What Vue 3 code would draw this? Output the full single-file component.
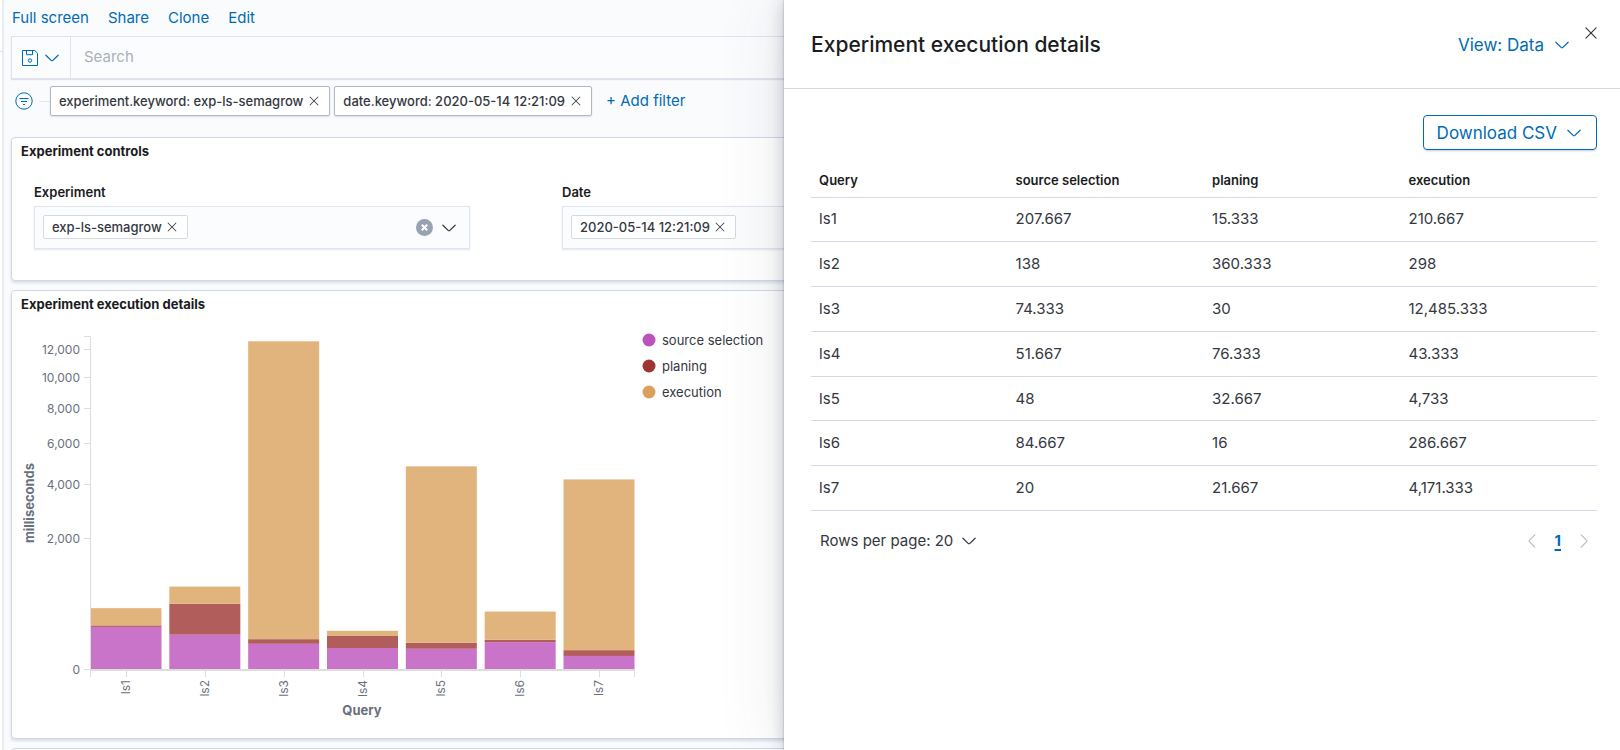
<script setup>
import { computed, ref } from 'vue'

const search = ref('')
const menu = ['Full screen', 'Share', 'Clone', 'Edit']
const filters = ['experiment.keyword: exp-ls-semagrow', 'date.keyword: 2020-05-14 12:21:09']
const controls = [
  { id: 'experiment', label: 'Experiment', value: 'exp-ls-semagrow' },
  { id: 'date', label: 'Date', value: '2020-05-14 12:21:09' }
]
const columns = ['Query', 'source selection', 'planing', 'execution']
const series = [
  { name: 'source selection', dot: '#bc52bc', fill: '#c973c9' },
  { name: 'planing', dot: '#9e3533', fill: '#b15d5b' },
  { name: 'execution', dot: '#daa05d', fill: '#e1b37d' }
]
const rows = [
  ['ls1', 207.667, 15.333, 210.667],
  ['ls2', 138, 360.333, 298],
  ['ls3', 74.333, 30, 12485.333],
  ['ls4', 51.667, 76.333, 43.333],
  ['ls5', 48, 32.667, 4733],
  ['ls6', 84.667, 16, 286.667],
  ['ls7', 20, 21.667, 4171.333]
]
const format = (v) => (typeof v === 'number' ? v.toLocaleString('en-US') : v)

// Square-root value scale over a band scale
const plotHeight = 333
const plotWidth = 544
const domainMax = 13000
const barWidth = 71
const step = (plotWidth - barWidth) / (rows.length - 1)
const y = (v) => plotHeight - plotHeight * Math.sqrt(v / domainMax)
const yTicks = [0, 2000, 4000, 6000, 8000, 10000, 12000].map((v) => ({ v, pos: Math.round(y(v)) + 0.5 }))

const bars = computed(() =>
  rows.map(([name, ...values], i) => {
    let sum = 0
    const parts = values.map((v, s) => {
      const bottom = y(sum)
      sum += v
      return { top: y(sum), height: bottom - y(sum), fill: series[s].fill }
    })
    const x = 0.5 + i * step
    return { name, x, mid: Math.round(x + barWidth / 2), parts }
  })
)

const chevron =
  'M13.069 5.157L8.384 9.768a.546.546 0 01-.768 0L2.93 5.158a.552.552 0 00-.771 0 .53.53 0 000 .759l4.684 4.61c.641.631 1.672.63 2.312 0l4.684-4.61a.53.53 0 000-.76.552.552 0 00-.771 0z'
const cross =
  'M7.293 8L3.146 3.854a.5.5 0 11.708-.708L8 7.293l4.146-4.147a.5.5 0 01.708.708L8.707 8l4.147 4.146a.5.5 0 01-.708.708L8 8.707l-4.146 4.147a.5.5 0 01-.708-.708L7.293 8z'
</script>

<template>
  <div class="app">
    <div class="nav-edge"></div>
    <main class="dashboard">
      <nav class="menu">
        <a v-for="item in menu" :key="item" href="#">{{ item }}</a>
      </nav>

      <div class="search">
        <button class="saved" aria-label="Saved queries">
          <svg width="18" height="18" viewBox="0 0 18 18" fill="none" stroke="currentColor">
            <path d="M1.5 1.5h12.3l2.7 2.7v12.3h-15z" />
            <path d="M5.5 1.5v4.2h6V1.5" />
            <circle cx="9" cy="11.5" r="1.7" />
          </svg>
          <svg class="icon" viewBox="0 0 16 16"><path :d="chevron" /></svg>
        </button>
        <input v-model="search" type="text" placeholder="Search" aria-label="Search" />
      </div>

      <div class="filters">
        <button class="filter-menu" aria-label="Filter options">
          <svg width="18" height="18" viewBox="0 0 18 18" fill="none" stroke="currentColor">
            <circle cx="9" cy="9" r="8.2" />
            <path d="M4.5 6.5h9M6 9.5h6M8 12.5h2" />
          </svg>
        </button>
        <span class="branch"></span>
        <span v-for="f in filters" :key="f" class="filter">
          {{ f }}
          <button :aria-label="'Remove ' + f"><svg class="small" viewBox="0 0 16 16"><path :d="cross" /></svg></button>
        </span>
        <button class="add">+ Add filter</button>
      </div>

      <section class="panel">
        <h2>Experiment controls</h2>
        <div class="controls">
          <div v-for="c in controls" :key="c.id" class="control">
            <label :for="c.id">{{ c.label }}</label>
            <div class="combo">
              <span class="pill">
                {{ c.value }}
                <button :aria-label="'Remove ' + c.value"><svg class="small" viewBox="0 0 16 16"><path :d="cross" /></svg></button>
              </span>
              <input :id="c.id" type="text" />
              <button class="clear" :aria-label="'Clear ' + c.label">
                <svg width="17" height="17" viewBox="0 0 17 17">
                  <circle cx="8.5" cy="8.5" r="8.5" fill="#98a2b3" />
                  <path d="M5.8 5.8l5.4 5.4M11.2 5.8l-5.4 5.4" stroke="#fff" stroke-width="2" />
                </svg>
              </button>
              <button :aria-label="'Open ' + c.label"><svg class="icon" viewBox="0 0 16 16"><path :d="chevron" /></svg></button>
            </div>
          </div>
        </div>
      </section>

      <section class="panel">
        <h2>Experiment execution details</h2>
        <div class="chart">
          <svg width="624" height="419" viewBox="0 0 624 419" role="img" aria-label="Milliseconds per query">
            <g transform="translate(78 17)">
              <g v-for="b in bars" :key="b.name">
                <rect
                  v-for="(p, i) in b.parts" :key="i"
                  :x="b.x" :y="p.top" :width="barWidth" :height="p.height" :fill="p.fill"
                />
              </g>
              <g class="axis">
                <path d="M-6 .5H.5V333" />
                <path v-for="t in yTicks" :key="t.v" :d="`M-6 ${t.pos}H0`" />
                <path class="base" :d="`M0 ${plotHeight + 1}H${plotWidth}`" />
                <path :d="`M.5 ${plotHeight}v8M${plotWidth + .5} ${plotHeight}v8`" />
                <path v-for="b in bars" :key="b.name" :d="`M${b.mid + .5} ${plotHeight + 1}v7`" />
              </g>
              <text v-for="t in yTicks" :key="t.v" class="tick" x="-10" :y="t.pos + 4" text-anchor="end">{{ format(t.v) }}</text>
              <text
                v-for="b in bars" :key="b.name" class="tick" text-anchor="end"
                :transform="`translate(${b.mid + 4} 344) rotate(-90)`"
              >{{ b.name }}</text>
              <text class="title" :x="plotWidth / 2" y="379" text-anchor="middle">Query</text>
              <text class="title" text-anchor="middle" transform="translate(-56 167) rotate(-90)">milliseconds</text>
            </g>
          </svg>
          <ul class="legend">
            <li v-for="s in series" :key="s.name">
              <svg width="14" height="14" viewBox="0 0 14 14"><circle cx="7" cy="7" r="6.5" :fill="s.dot" /></svg>
              {{ s.name }}
            </li>
          </ul>
        </div>
      </section>
      <section class="panel next"></section>
    </main>

    <aside class="flyout">
      <button class="close" aria-label="Close"><svg class="icon" viewBox="0 0 16 16"><path :d="cross" /></svg></button>
      <header>
        <h1>Experiment execution details</h1>
        <button class="view">View: Data <svg class="icon" viewBox="0 0 16 16"><path :d="chevron" /></svg></button>
      </header>
      <div class="body">
        <button class="download">Download CSV <svg class="icon" viewBox="0 0 16 16"><path :d="chevron" /></svg></button>
        <table>
          <thead>
            <tr><th v-for="c in columns" :key="c" scope="col">{{ c }}</th></tr>
          </thead>
          <tbody>
            <tr v-for="r in rows" :key="r[0]"><td v-for="(v, i) in r" :key="i">{{ format(v) }}</td></tr>
          </tbody>
        </table>
        <footer>
          <button class="per-page">Rows per page: 20 <svg class="icon" viewBox="0 0 16 16"><path :d="chevron" /></svg></button>
          <nav class="pages" aria-label="Pagination">
            <button disabled aria-label="Previous page"><svg class="icon left" viewBox="0 0 16 16"><path :d="chevron" /></svg></button>
            <a href="#" aria-current="page">1</a>
            <button disabled aria-label="Next page"><svg class="icon right" viewBox="0 0 16 16"><path :d="chevron" /></svg></button>
          </nav>
        </footer>
      </div>
    </aside>
  </div>
</template>

<style>
body { overflow: hidden; }
</style>

<style scoped>
* { box-sizing: border-box; }
.app {
  position: relative;
  display: flex;
  height: 100vh;
  overflow: hidden;
  background: #fafbfd;
  color: #343741;
  font: 400 15px/24px Inter, "Liberation Sans", sans-serif;
}
button {
  display: inline-flex;
  align-items: center;
  padding: 0;
  border: 0;
  background: none;
  color: inherit;
  font: inherit;
  cursor: pointer;
}
input {
  min-width: 0;
  flex: 1;
  border: 0;
  outline: 0;
  background: none;
  color: inherit;
  font: inherit;
}
h1, h2, ul { margin: 0; padding: 0; }
a { color: #006bb4; text-decoration: none; }
svg { display: block; flex: none; }
.icon { width: 18px; height: 18px; fill: currentColor; }
.small { width: 14px; height: 14px; fill: currentColor; }

.nav-edge {
  width: 4px;
  flex: none;
  border-right: 2px solid #e9ebf3;
  background: linear-gradient(#d9dde9, #d9dde9) 0 51px / 2px 1px no-repeat, #fff;
}
.dashboard { flex: 1; min-width: 0; padding: 0 11px 0 7px; }
.menu { display: flex; gap: 19px; height: 36px; padding: 6px 1px; }

.search {
  display: flex;
  height: 43px;
  border: 1px solid #dfe3ee;
  background: #fbfcfd;
  box-shadow: 0 1px 1px #dfe2ea;
}
.saved {
  gap: 4px;
  padding: 0 9px;
  border-right: 1px solid #dfe3ee;
  color: #006bb4;
}
.search input { padding: 0 13px 2px; }
.search input::placeholder { color: #abb0ba; opacity: 1; }

.filters { display: flex; align-items: center; height: 58px; padding: 0 0 14px 4px; }
.filter-menu { color: #006bb4; }
.branch { width: 11px; height: 1px; margin-left: 6px; background: #e2e6ef; }
.filter {
  display: flex;
  align-items: center;
  gap: 4px;
  height: 30px;
  margin-right: 4px;
  padding: 0 8px;
  border: 1px solid #b0b8c8;
  border-radius: 2px;
  background: #fff;
  box-shadow: 0 1px 2px #d9dde6;
  font-size: 13px;
  font-weight: 500;
}
.add { margin-left: 10px; color: #006bb4; }

.panel {
  margin-bottom: 9px;
  border: 1px solid #d0d7e6;
  border-radius: 4px;
  background: #fff;
  box-shadow: 0 2px 3px #d8dde8;
}
.panel h2 {
  padding: 3px 9px 5px;
  color: #1a1c21;
  font-size: 13px;
  line-height: 20px;
  font-weight: 700;
}
.next { height: 200px; }
.controls {
  display: grid;
  grid-template-columns: repeat(3, 1fr);
  gap: 92px;
  padding: 15px 82px 31px 22px;
}
.control label {
  display: block;
  margin-bottom: 3px;
  color: #1a1c21;
  font-size: 13px;
  line-height: 22px;
  font-weight: 600;
}
.combo {
  display: flex;
  align-items: center;
  height: 43px;
  padding: 0 11px 0 8px;
  border: 1px solid #dfe4ee;
  background: #fbfcfd;
  box-shadow: 0 1px 2px #e3e6ed;
}
.pill {
  display: flex;
  align-items: center;
  gap: 3px;
  height: 24px;
  margin-bottom: 2px;
  padding: 1px 8px 0;
  border: 1px solid #d3dae6;
  border-radius: 2px;
  background: #fff;
  font-size: 13px;
  font-weight: 500;
}
.clear { margin-right: 7px; }

.chart { display: flex; }
.legend { margin: 8px 0 0 6px; list-style: none; font-size: 13px; }
.legend li { display: flex; align-items: center; gap: 6px; height: 26px; }
.axis { fill: none; stroke: #ddd; }
.base { stroke-width: 2; }
.tick { fill: #69707d; font-size: 12px; }
.title { fill: #69707d; font-size: 13px; font-weight: 700; }

.flyout {
  position: absolute;
  top: 0;
  right: 0;
  bottom: 0;
  width: 51.6%;
  background: #fff;
  box-shadow: 0 0 2px rgba(65, 70, 90, .4), 0 0 16px rgba(65, 70, 90, .28), 0 0 64px rgba(65, 70, 90, .12);
}
.close { position: absolute; top: 24px; right: 20px; }
header {
  display: flex;
  align-items: center;
  justify-content: space-between;
  height: 89px;
  padding: 2px 49px 0 27px;
  border-bottom: 1px solid #d3dae6;
}
h1 { color: #1a1c21; font-size: 21px; line-height: 32px; font-weight: 500; }
.view { gap: 9px; color: #006bb4; font-size: 17px; }
.body { display: flex; flex-direction: column; padding: 26px 23px 0 27px; }
.download {
  align-self: flex-end;
  gap: 8px;
  height: 35px;
  padding: 0 13px;
  border: 1px solid #006bb4;
  border-radius: 4px;
  box-shadow: 0 2px 2px -1px rgba(54, 97, 126, .3);
  color: #006bb4;
  font-size: 17px;
}
table {
  width: 100%;
  height: 348px;
  margin-top: 13px;
  border-collapse: collapse;
  table-layout: fixed;
}
th, td {
  padding: 0 8px;
  border-bottom: 1px solid #d3dae6;
  text-align: left;
}
th { height: 34px; color: #1a1c21; font-size: 13px; font-weight: 600; }
footer {
  display: flex;
  align-items: center;
  justify-content: space-between;
  padding: 18px 4px 0 9px;
}
.per-page { gap: 7px; }
.pages { display: flex; align-items: center; gap: 14px; }
.pages a { font-weight: 700; text-decoration: underline; text-decoration-thickness: 2px; text-underline-offset: 3px; }
.pages button { color: #b8bcc4; }
.left { transform: rotate(90deg); }
.right { transform: rotate(-90deg); }
</style>
